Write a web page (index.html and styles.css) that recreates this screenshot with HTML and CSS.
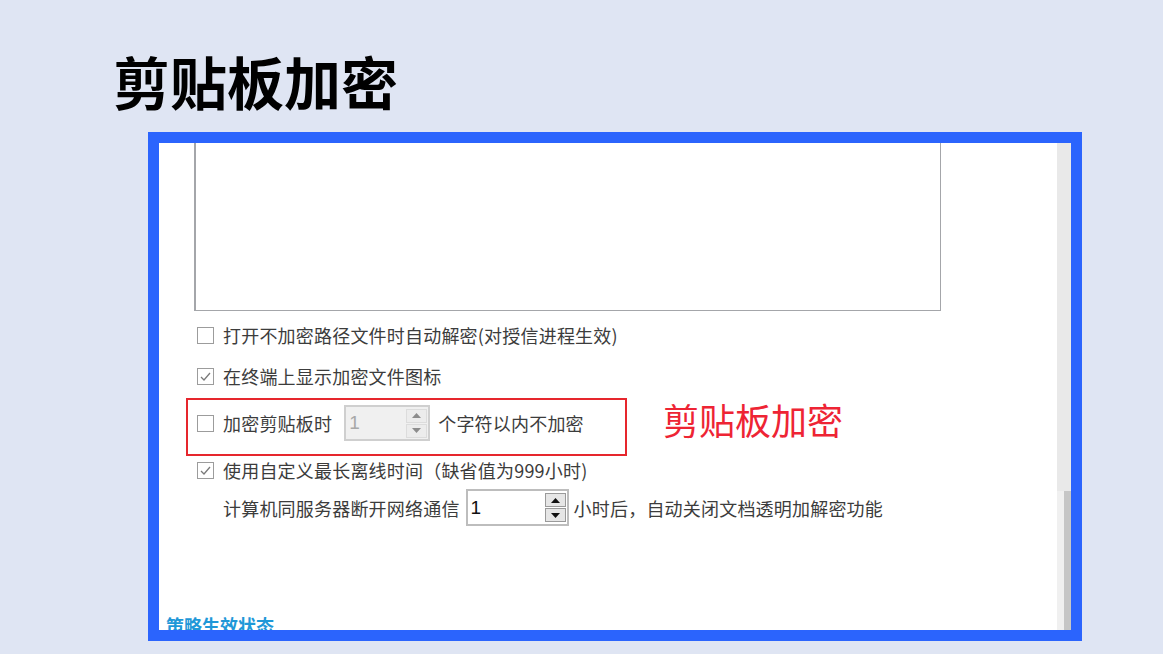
FILE: index.html
```html
<!DOCTYPE html>
<html lang="zh-CN">

<head>
  <meta charset="UTF-8">
  <meta name="viewport" content="width=device-width, initial-scale=1.0">
  <title>剪贴板加密</title>
  <link rel="stylesheet" href="styles.css">
</head>

<body>
  <!-- 标题 -->
  <h1 class="page-title">剪贴板加密</h1>

  <!-- 截图外框 -->
  <div class="shot-frame">
    <div class="shot-inner">
      <div class="settings">
        <!-- 上方列表框（上边被截掉） -->
        <div class="list-box"></div>

        <div class="options">
          <label class="opt-row">
            <span class="check"></span>
            <span>打开不加密路径文件时自动解密(对授信进程生效)</span>
          </label>

          <label class="opt-row">
            <span class="check checked">
              <svg viewBox="0 0 17 17" width="17" height="17"><polyline points="4,9 7,12 13,5" fill="none" stroke="#7a7a7a" stroke-width="1.3"/></svg>
            </span>
            <span>在终端上显示加密文件图标</span>
          </label>

          <div class="opt-row clip-row">
            <span class="check"></span>
            <span>加密剪贴板时</span>
            <div class="spinner disabled">
              <span class="spin-value">1</span>
              <div class="spin-btns">
                <span class="spin-btn"><svg viewBox="0 0 9 5" width="9" height="5"><polygon points="0,5 9,5 4.5,0" fill="#8c8c8c"/></svg></span>
                <span class="spin-btn"><svg viewBox="0 0 9 5" width="9" height="5"><polygon points="0,0 9,0 4.5,5" fill="#8c8c8c"/></svg></span>
              </div>
            </div>
            <span>个字符以内不加密</span>

            <!-- 标注 -->
            <div class="callout-box"></div>
            <div class="callout-text">剪贴板加密</div>
          </div>

          <label class="opt-row">
            <span class="check checked">
              <svg viewBox="0 0 17 17" width="17" height="17"><polyline points="4,9 7,12 13,5" fill="none" stroke="#7a7a7a" stroke-width="1.3"/></svg>
            </span>
            <span>使用自定义最长离线时间（缺省值为999小时)</span>
          </label>

          <div class="opt-row sub-row">
            <span>计算机同服务器断开网络通信</span>
            <div class="spinner">
              <span class="spin-value">1</span>
              <div class="spin-btns">
                <span class="spin-btn"><svg viewBox="0 0 9 5" width="9" height="5"><polygon points="0,5 9,5 4.5,0" fill="#111"/></svg></span>
                <span class="spin-btn"><svg viewBox="0 0 9 5" width="9" height="5"><polygon points="0,0 9,0 4.5,5" fill="#111"/></svg></span>
              </div>
            </div>
            <span class="after-spin">小时后，自动关闭文档透明加解密功能</span>
          </div>
        </div>

        <div class="section-title">策略生效状态</div>
      </div>

      <!-- 滚动条 -->
      <div class="scrollbar">
        <div class="scroll-track"></div>
        <div class="scroll-low">
          <div class="scroll-thumb"></div>
        </div>
      </div>
    </div>
  </div>
</body>

</html>
```

FILE: styles.css
```css
body {
  margin: 0;
  background: #dfe5f3;
  font-family: "Noto Sans CJK SC", "Noto Sans", sans-serif;
}

.page-title {
  margin: 46px 0 0 113px;
  font-size: 57px;
  line-height: 68px;
  font-weight: 700;
  color: #000;
}

/* 蓝色外框 */
.shot-frame {
  margin: 18px 0 0 148px;
  width: 934px;
  height: 509px;
  box-sizing: border-box;
  border: 11px solid #2b64fd;
  background: #fff;
}

.shot-inner {
  display: flex;
  height: 100%;
  overflow: hidden;
}

.settings {
  flex: 1;
  padding-left: 35px;
  color: #3c3c3c;
  font-size: 18px;
  letter-spacing: 0.2px;
}

.list-box {
  width: 747px;
  height: 168px;
  box-sizing: border-box;
  border: 1px solid #a4a6aa;
  border-top: none;
  border-left-width: 2px;
}

.options {
  display: flex;
  flex-direction: column;
  padding: 12px 0 0 3px;
}

.opt-row {
  display: flex;
  align-items: center;
  height: 24px;
  line-height: 24px;
  margin-bottom: 17px;
  white-space: nowrap;
}

.check {
  width: 17px;
  height: 17px;
  box-sizing: border-box;
  border: 1px solid #9c9c9c;
  background: #fff;
  margin-right: 9px;
  display: flex;
}

.check svg {
  margin: -1px;
}

/* 数字输入框 */
.spinner {
  display: flex;
  align-items: center;
  box-sizing: border-box;
  border: 2px solid #c4c4c4;
  background: #fff;
  color: #111;
}

.spin-value {
  flex: 1;
  padding-left: 3px;
  font-family: "Liberation Sans", sans-serif;
  font-size: 19px;
}

.spin-btns {
  display: flex;
  flex-direction: column;
  gap: 1px;
  margin-right: 1px;
}

.spin-btn {
  display: flex;
  align-items: center;
  justify-content: center;
  width: 21px;
  height: 14px;
  box-sizing: border-box;
  border: 1px solid #9a9a9a;
  background: #e6e6e6;
}

.clip-row {
  position: relative;
  height: 36px;
}

.clip-row .spinner {
  width: 86px;
  height: 36px;
  margin: 0 8px 0 12px;
}

.spinner.disabled {
  background: #f0f0f0;
  border-color: #cfcfcf;
  color: #a8a8a8;
}

.spinner.disabled .spin-btn {
  border-color: #dcdcdc;
  background: #ececec;
}

.sub-row {
  height: 37px;
  margin-top: -10px;
  padding-left: 26px;
}

.sub-row .spinner {
  width: 103px;
  height: 37px;
  margin: 0 5px 0 6px;
  border-color: #bdbdbd;
}

.callout-box {
  position: absolute;
  left: -11px;
  top: -7px;
  width: 441px;
  height: 58px;
  box-sizing: border-box;
  border: 2px solid #e6262d;
}

.callout-text {
  position: absolute;
  left: 466px;
  top: -6px;
  font-size: 36px;
  line-height: 40px;
  letter-spacing: 0;
  color: #ee2434;
}

.section-title {
  margin: 70px 0 0 -28px;
  font-size: 18px;
  line-height: 24px;
  font-weight: 700;
  letter-spacing: 0;
  color: #1f98d8;
}

/* 右侧滚动条 */
.scrollbar {
  width: 14px;
  display: flex;
  flex-direction: column;
}

.scroll-track {
  height: 348px;
  background: #e9e9e9;
}

.scroll-low {
  flex: 1;
  display: flex;
  justify-content: flex-end;
  background: #f0f0f0;
}

.scroll-thumb {
  width: 7px;
  background: #c6c6c6;
}
```
